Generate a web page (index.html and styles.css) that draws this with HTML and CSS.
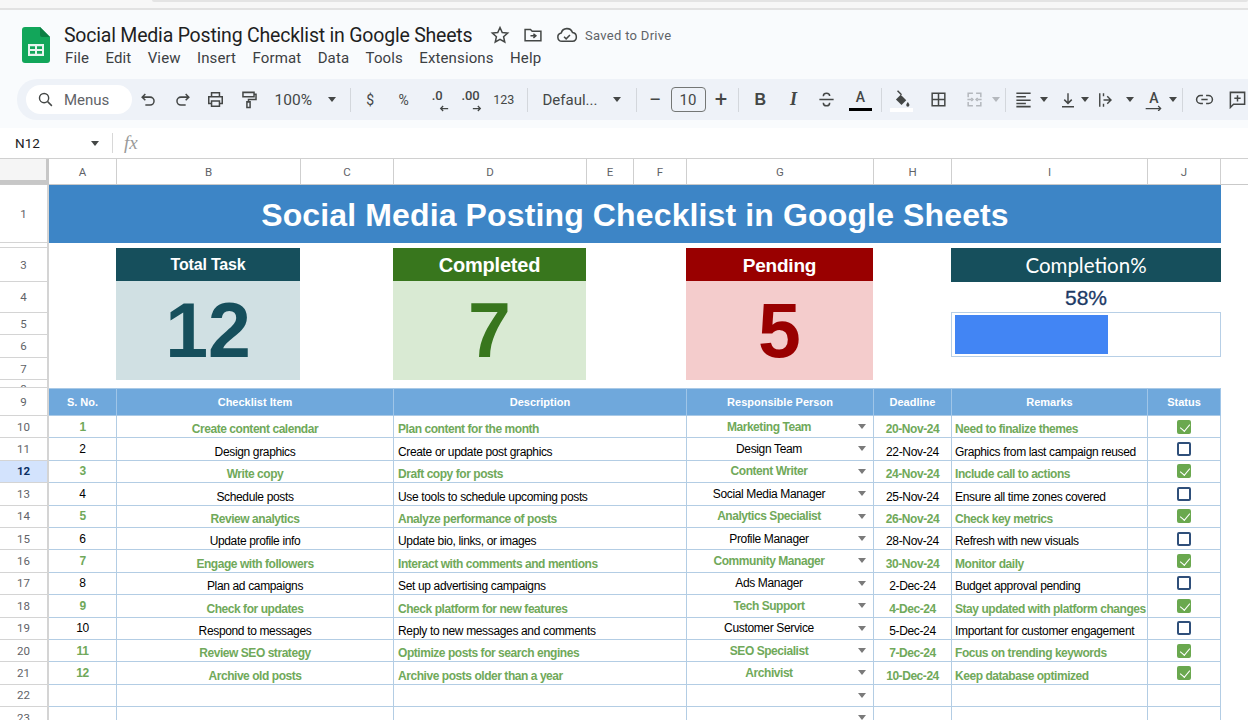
FILE: index.html
```html
<!DOCTYPE html>
<html lang="en">
<head>
<meta charset="utf-8">
<title>Social Media Posting Checklist in Google Sheets</title>
<link rel="stylesheet" href="styles.css">
</head>
<body>
<div class="browser-strip"><div class="browser-pill"></div></div>
<header class="doc-head">
  <svg class="logo" viewBox="0 0 28 36"><path d="M3 0H18L28 10V33a3 3 0 0 1-3 3H3a3 3 0 0 1-3-3V3a3 3 0 0 1 3-3Z" fill="#12a65a"/><path d="M18 0L28 10H20a2 2 0 0 1-2-2Z" fill="#0b7f43"/><path d="M6 17H22V29H6Z M8 19.2V22H13V19.2Z M15 19.2V22H20V19.2Z M8 24V26.8H13V24Z M15 24V26.8H20V24Z" fill="#e8f5ee" fill-rule="evenodd"/></svg>
  <div class="doc-info">
    <div class="doc-title-row">
      <h1 class="doc-title">Social Media Posting Checklist in Google Sheets</h1>
      <svg class="ti star" viewBox="0 0 24 24"><path d="M12 3l2.7 6 6.5.7-4.9 4.3 1.4 6.4L12 17.1l-5.7 3.3 1.4-6.4-4.9-4.3 6.5-.7Z"/></svg>
      <svg class="ti folder" viewBox="0 0 24 24"><path d="M2.5 19V5.5h6.5l2 2h10.500V19Z"/><path d="M9 13h6M12.500 10.500L15.500 13l-3 2.500"/></svg>
      <svg class="ti cloud" viewBox="0 0 26 20"><path d="M7 17.500a5 5 0 0 1-.8-9.900A7 7 0 0 1 19.500 7a5.300 5.300 0 0 1 0 10.500Z"/><path d="M9.500 12l2.500 2.500 4.500-4.500"/></svg>
      <span class="saved">Saved to Drive</span>
    </div>
    <nav class="menu">
      <span>File</span><span>Edit</span><span>View</span><span>Insert</span><span>Format</span><span>Data</span><span>Tools</span><span>Extensions</span><span>Help</span>
    </nav>
  </div>
</header>

<div class="toolbar-wrap">
  <div class="toolbar">
    <div class="search">
      <svg class="sico" viewBox="0 0 24 24"><circle cx="10" cy="10" r="6.500"/><path d="M15 15l6 6"/></svg>
      <span>Menus</span>
    </div>
    <span class="btn"><svg viewBox="0 0 24 24"><path d="M8 5L4 9l4 4M4 9h10a5 5 0 0 1 0 10H8"/></svg></span>
    <span class="btn"><svg viewBox="0 0 24 24"><path d="M16 5l4 4-4 4M20 9H10a5 5 0 0 0 0 10h6"/></svg></span>
    <span class="btn"><svg viewBox="0 0 24 24"><path d="M7 8V3.500h10V8M7 17H3.500V8.500h17V17H17M7 14h10v6.500H7Z"/></svg></span>
    <span class="btn"><svg viewBox="0 0 24 24"><path d="M5 3h14v5.500H5ZM19 5.500h2.500V12H12v3M10 15h4v7h-4Z"/></svg></span>
    <span class="zoom">100%</span><i class="caret zoom-caret"></i>
    <i class="sep sep-a"></i>
    <span class="btn txt">$</span>
    <span class="btn txt">%</span>
    <span class="btn dec dec-l">.0<svg viewBox="0 0 12 8"><path d="M11 4H2M5 1L2 4l3 3"/></svg></span>
    <span class="btn dec dec-r">.00<svg viewBox="0 0 12 8"><path d="M1 4h9M7 1l3 3-3 3"/></svg></span>
    <span class="btn num">123</span>
    <i class="sep sep-b"></i>
    <span class="fontname">Defaul...</span><i class="caret font-caret"></i>
    <i class="sep sep-c"></i>
    <span class="btn sign">&#8722;</span>
    <span class="size">10</span>
    <span class="btn sign plus">+</span>
    <i class="sep sep-d"></i>
    <span class="btn bold">B</span>
    <span class="btn ital">I</span>
    <span class="btn"><svg viewBox="0 0 24 24"><path d="M3 12h18M8 8c0-3 1.500-4 4-4s4 1 4 3.500M8 16c0 3 1.500 4 4 4s4-1 4-4"/></svg></span>
    <span class="btn letter">A<i class="colorbar"></i></span>
    <i class="sep sep-e"></i>
    <span class="btn"><svg viewBox="0 0 24 24"><path class="solid" d="M11 6l7 7-6 6-7-7Z"/><path d="M7 1l5 5"/><path class="solid" d="M20 15c1.500 2 2 3 2 4a2 2 0 0 1-4 0c0-1 .5-2 2-4Z"/></svg><i class="whitebar"></i></span>
    <span class="btn borders"><svg viewBox="0 0 24 24"><path d="M4 4h16v16H4ZM12 4v16M4 12h16"/></svg></span>
    <span class="btn merge"><svg viewBox="0 0 24 24"><path d="M10 4H4v5M4 15v5h6M14 4h6v5M20 15v5h-6M3 12h5M8 10l2 2-2 2M21 12h-5M16 10l-2 2 2 2"/></svg></span><i class="caret light merge-caret"></i>
    <i class="sep sep-f"></i>
    <span class="btn narrow"><svg viewBox="0 0 24 24"><path d="M3 4h18M3 8.500h12M3 13h18M3 17h12M3 21h18"/></svg></span><i class="caret"></i>
    <span class="btn narrow valign"><svg viewBox="0 0 24 24"><path d="M12 3v13M7 11.500l5 5 5-5M4 21h16"/></svg></span><i class="caret"></i>
    <span class="btn narrow wrap"><svg viewBox="0 0 24 24"><path d="M5 3v18M10 12h10M15 7l5 5-5 5M10 3v4M10 17v4"/></svg></span><i class="caret"></i>
    <span class="btn narrow rotate"><b class="ra">A</b><svg viewBox="0 0 24 24"><path d="M2 21h18M17 18l3 3-3 3"/></svg></span><i class="caret"></i>
    <i class="sep sep-g"></i>
    <span class="btn"><svg viewBox="0 0 24 24"><path d="M10 7H7a5 5 0 0 0 0 10h3M14 7h3a5 5 0 0 1 0 10h-3M8 12h8"/></svg></span>
    <span class="btn"><svg viewBox="0 0 24 24"><path d="M3 3h18v15H7l-4 4ZM12 6.500v8M8 10.500h8"/></svg></span>
  </div>
</div>

<div class="formula">
  <span class="namebox">N12</span><i class="caret name-caret"></i>
  <i class="fsep"></i>
  <span class="fx">fx</span>
</div>

<div class="colheads">
  <div class="corner"></div>
  <div>A</div><div>B</div><div>C</div><div>D</div><div>E</div><div>F</div><div>G</div><div>H</div><div>I</div><div>J</div><div class="blank"></div>
</div>

<main class="sheet">
  <div class="rh r1">1</div>
  <div class="banner">Social Media Posting Checklist in Google Sheets</div>
  <div class="rh r2 clip">2</div>
  <div class="rh r3">3</div>
  <div class="rh r4">4</div>
  <div class="rh r5">5</div>
  <div class="rh r6">6</div>
  <div class="rh r7">7</div>
  <div class="rh r8 clip">8</div>

  <div class="kpi kpi-total"><div class="kpi-h">Total Task</div><div class="kpi-v">12</div></div>
  <div class="kpi kpi-done"><div class="kpi-h big">Completed</div><div class="kpi-v">7</div></div>
  <div class="kpi kpi-pend"><div class="kpi-h mid">Pending</div><div class="kpi-v">5</div></div>
  <div class="progress">
    <div class="prog-h">Completion%</div>
    <div class="prog-pct">58%</div>
    <div class="prog-track"><div class="prog-bar" style="width:58.300%"></div></div>
  </div>

  <div class="rh r9">9</div>
  <div class="th a">S. No.</div><div class="th b">Checklist Item</div><div class="th d">Description</div><div class="th g">Responsible Person</div><div class="th h">Deadline</div><div class="th i">Remarks</div><div class="th j">Status</div>

  <div class="rh">10</div><div class="c a done">1</div><div class="c b done">Create content calendar</div><div class="c d done">Plan content for the month</div><div class="c g done">Marketing Team<i class="dd"></i></div><div class="c h done">20-Nov-24</div><div class="c i done">Need to finalize themes</div><div class="c j"><i class="box on"></i></div>
  <div class="rh">11</div><div class="c a">2</div><div class="c b">Design graphics</div><div class="c d">Create or update post graphics</div><div class="c g">Design Team<i class="dd"></i></div><div class="c h">22-Nov-24</div><div class="c i">Graphics from last campaign reused</div><div class="c j"><i class="box"></i></div>
  <div class="rh sel">12</div><div class="c a done">3</div><div class="c b done">Write copy</div><div class="c d done">Draft copy for posts</div><div class="c g done">Content Writer<i class="dd"></i></div><div class="c h done">24-Nov-24</div><div class="c i done">Include call to actions</div><div class="c j"><i class="box on"></i></div>
  <div class="rh">13</div><div class="c a">4</div><div class="c b">Schedule posts</div><div class="c d">Use tools to schedule upcoming posts</div><div class="c g">Social Media Manager<i class="dd"></i></div><div class="c h">25-Nov-24</div><div class="c i">Ensure all time zones covered</div><div class="c j"><i class="box"></i></div>
  <div class="rh">14</div><div class="c a done">5</div><div class="c b done">Review analytics</div><div class="c d done">Analyze performance of posts</div><div class="c g done">Analytics Specialist<i class="dd"></i></div><div class="c h done">26-Nov-24</div><div class="c i done">Check key metrics</div><div class="c j"><i class="box on"></i></div>
  <div class="rh">15</div><div class="c a">6</div><div class="c b">Update profile info</div><div class="c d">Update bio, links, or images</div><div class="c g">Profile Manager<i class="dd"></i></div><div class="c h">28-Nov-24</div><div class="c i">Refresh with new visuals</div><div class="c j"><i class="box"></i></div>
  <div class="rh">16</div><div class="c a done">7</div><div class="c b done">Engage with followers</div><div class="c d done">Interact with comments and mentions</div><div class="c g done">Community Manager<i class="dd"></i></div><div class="c h done">30-Nov-24</div><div class="c i done">Monitor daily</div><div class="c j"><i class="box on"></i></div>
  <div class="rh">17</div><div class="c a">8</div><div class="c b">Plan ad campaigns</div><div class="c d">Set up advertising campaigns</div><div class="c g">Ads Manager<i class="dd"></i></div><div class="c h">2-Dec-24</div><div class="c i">Budget approval pending</div><div class="c j"><i class="box"></i></div>
  <div class="rh">18</div><div class="c a done">9</div><div class="c b done">Check for updates</div><div class="c d done">Check platform for new features</div><div class="c g done">Tech Support<i class="dd"></i></div><div class="c h done">4-Dec-24</div><div class="c i done">Stay updated with platform changes</div><div class="c j"><i class="box on"></i></div>
  <div class="rh">19</div><div class="c a">10</div><div class="c b">Respond to messages</div><div class="c d">Reply to new messages and comments</div><div class="c g">Customer Service<i class="dd"></i></div><div class="c h">5-Dec-24</div><div class="c i">Important for customer engagement</div><div class="c j"><i class="box"></i></div>
  <div class="rh">20</div><div class="c a done">11</div><div class="c b done">Review SEO strategy</div><div class="c d done">Optimize posts for search engines</div><div class="c g done">SEO Specialist<i class="dd"></i></div><div class="c h done">7-Dec-24</div><div class="c i done">Focus on trending keywords</div><div class="c j"><i class="box on"></i></div>
  <div class="rh">21</div><div class="c a done">12</div><div class="c b done">Archive old posts</div><div class="c d done">Archive posts older than a year</div><div class="c g done">Archivist<i class="dd"></i></div><div class="c h done">10-Dec-24</div><div class="c i done">Keep database optimized</div><div class="c j"><i class="box on"></i></div>
  <div class="rh">22</div><div class="c a"></div><div class="c b"></div><div class="c d"></div><div class="c g"><i class="dd"></i></div><div class="c h"></div><div class="c i"></div><div class="c j"></div>
  <div class="rh">23</div><div class="c a"></div><div class="c b"></div><div class="c d"></div><div class="c g"><i class="dd"></i></div><div class="c h"></div><div class="c i"></div><div class="c j"></div>
</main>
</body>
</html>
```

FILE: styles.css
```css
* { box-sizing: border-box; }
html, body { margin: 0; height: 720px; overflow: hidden; }
body { background: #fff; font-family: Roboto, "Liberation Sans", sans-serif; color: #202124; }

.browser-strip { height: 10px; background: #f7f7f7; border-bottom: 2px solid #e2e2e2; padding-left: 152px; }
.browser-pill { height: 2px; background: #e4e4e4; border-radius: 0 0 3px 3px; }

.doc-head { height: 69px; background: #f9fbfd; display: flex; padding: 17px 0 0 22px; }
.logo { width: 28px; height: 36px; flex: none; }
.doc-info { margin-left: 14px; margin-top: -4px; }
.doc-title-row { display: flex; align-items: center; height: 24px; }
.doc-title { margin: 0; font-size: 19.500px; font-weight: 400; color: #1f1f1f; letter-spacing: -0.21px; white-space: nowrap; width: 426px; }
.ti { width: 20px; height: 20px; fill: none; stroke: #444746; stroke-width: 1.800; flex: none; }
.folder { margin-left: 13px; }
.cloud { margin-left: 13px; width: 22px; }
.saved { margin-left: 7px; font-size: 13px; color: #5f6368; letter-spacing: .3px; }
.menu { display: flex; gap: 16.400px; margin-top: 1px; font-size: 15px; letter-spacing: .12px; color: #3c4043; line-height: 20px; padding-left: 1px; }

.toolbar-wrap { height: 49px; background: #f9fbfd; padding-left: 17px; }
.toolbar { height: 41px; background: #eef2f8; border-radius: 20px 0 0 20px; display: flex; align-items: center; padding-left: 9px; width: 1231px; overflow: hidden; color: #444746; }
.search { width: 106px; height: 29px; background: #fff; border-radius: 15px; display: flex; align-items: center; padding-left: 11px; flex: none; font-size: 15px; color: #5f6368; }
.sico { width: 17px; height: 17px; fill: none; stroke: #444746; stroke-width: 2; margin-right: 10px; }
.btn { width: 33.400px; flex: none; height: 24px; display: flex; align-items: center; justify-content: center; position: relative; }
.btn svg { width: 19px; height: 19px; fill: none; stroke: #444746; stroke-width: 1.900; }
.btn svg .solid { fill: #444746; stroke: none; }
.zoom { width: 58px; flex: none; padding-left: 9px; font-size: 15.500px; color: #444746; }
.caret { display: block; width: 0; height: 0; flex: none; border: 4px solid transparent; border-top: 5px solid #444746; border-bottom: 0; }
.caret.light { border-top-color: #b4b8bd; }
.zoom-caret { margin-left: 4px; }
.sep { display: block; flex: none; width: 1px; height: 24px; background: #d3d7dc; }
.sep-a { margin: 0 3px 0 14px; }
.sep-b { margin: 0 15px 0 6px; }
.sep-c { margin: 0 3px 0 15px; }
.sep-d { margin: 0 5px 0 1px; }
.sep-e { margin: 0 3px 0 4px; }
.sep-f { margin: 0 3px 0 5px; }
.sep-g { margin: 0 5px 0 5px; }
.txt { font-size: 14px; color: #444746; }
.dec { font-size: 13px; font-weight: 500; align-items: flex-start; letter-spacing: -.2px; line-height: 16px; }
.dec svg { position: absolute; width: 10px; height: 7px; bottom: 0; stroke-width: 1.500; }
.dec-l svg { left: 19px; }
.dec-r svg { left: 18px; }
.num { font-size: 12.500px; }
.fontname { width: 68px; flex: none; font-size: 15px; color: #444746; }
.font-caret { margin-left: 2px; }
.sign { font-size: 22px; font-weight: 400; width: 31px; }
.size { width: 35px; height: 25px; flex: none; border: 1px solid #747775; border-radius: 4px; display: flex; align-items: center; justify-content: center; font-size: 15px; }
.bold { font-family: "Liberation Sans", sans-serif; font-weight: 700; font-size: 16px; }
.ital { font-family: "Liberation Serif", serif; font-style: italic; font-weight: 700; font-size: 18px; }
.letter { font-size: 14px; font-weight: 500; padding-bottom: 5px; }
.colorbar { position: absolute; left: 5px; right: 5px; top: 20px; height: 3.500px; background: #000; }
.whitebar { position: absolute; left: 5px; right: 5px; top: 20px; height: 4px; background: #fff; }
.borders { margin-left: 3px; }
.merge svg { stroke: #b4b8bd; }
.merge { width: 27px; margin-left: 6px; }
.merge-caret { margin-left: 4px; }
.narrow { width: 30px; }
.narrow + .caret { margin-left: 1px; }
.valign { margin-left: 8px; width: 24px; }
.valign svg, .wrap svg { width: 18px; height: 18px; }
.wrap { margin-left: 0; width: 32px; }
.narrow.wrap + .caret { margin-left: 5px; }
.rotate { margin-left: 6px; width: 28px; }
.rotate svg { position: absolute; left: 3px; top: 3px; width: 22px; height: 20px; stroke-width: 1.500; }
.ra { font-size: 14px; font-weight: 500; margin-top: -4px; }

.formula { height: 31px; background: #fff; display: flex; align-items: center; border-bottom: 1px solid #d0d0d0; padding-left: 15px; }
.namebox { width: 76px; font-size: 13.500px; color: #202124; }
.fsep { display: block; width: 1px; height: 20px; background: #d8d8d8; margin-left: 13px; }
.fx { font-family: "Liberation Serif", serif; font-style: italic; color: #9a9a9a; font-size: 19px; margin-left: 11px; }

.colheads { height: 26px; display: grid; grid-template-columns: 49px 68px 184px 93px 193px 47px 53px 187px 78px 196px 73px 27px; border-bottom: 1px solid #c9c9c9; background: #fff; }
.colheads div { display: flex; align-items: center; justify-content: center; font-size: 11.500px; color: #5f6368; border-right: 1px solid #cfcfcf; }
.colheads .blank { border-right: 0; }
.colheads .corner { background: #f5f5f5; border-right: 3px solid #c7c7c7; box-shadow: inset 0 -4px 0 #c7c7c7; }

.sheet { display: grid; grid-template-columns: 49px 68px 184px 93px 193px 47px 53px 187px 78px 196px 73px 27px; grid-template-rows: 58px 5px 34px 31px 22px 23px 22px 8px 28px repeat(14, 22.400px); font-family: "Liberation Sans", sans-serif; height: 535px; overflow: hidden; }
.rh { grid-column: 1; display: flex; align-items: center; justify-content: center; font-family: Roboto, sans-serif; font-size: 11.500px; color: #5f6368; border-right: 2px solid #d4d4d4; border-bottom: 1px solid #d4d4d4; background: #fff; overflow: hidden; }
.rh.clip { align-items: flex-start; padding-top: 2px; }
.rh.sel { background: #d3e3fd; color: #0b2f63; font-weight: 700; }
.r1 { grid-row: 1; } .r2 { grid-row: 2; } .r3 { grid-row: 3; } .r4 { grid-row: 4; } .r5 { grid-row: 5; } .r6 { grid-row: 6; } .r7 { grid-row: 7; } .r8 { grid-row: 8; } .r9 { grid-row: 9; }

.banner { grid-column: 2 / 12; grid-row: 1; background: #3d85c6; color: #fff; font-weight: 700; font-size: 32px; letter-spacing: .13px; display: flex; align-items: center; justify-content: center; padding-top: 2px; }

.kpi { grid-row: 3 / 8; display: flex; flex-direction: column; text-align: center; margin: 0 1px 0 -1px; }
.kpi-total { grid-column: 3; --dark: #164f5c; --light: #d0e0e3; }
.kpi-done { grid-column: 5; --dark: #38761d; --light: #d9ead3; }
.kpi-pend { grid-column: 8; --dark: #990000; --light: #f4cccc; }
.kpi-h { height: 33px; flex: none; background: var(--dark); color: #fff; font-weight: 700; font-size: 16px; letter-spacing: -.2px; display: flex; align-items: center; justify-content: center; }
.kpi-h.big { font-size: 20px; padding-top: 2px; }
.kpi-h.mid { font-size: 19px; padding-top: 2px; }
.kpi-v { flex: 1; background: var(--light); color: var(--dark); font-weight: 700; font-size: 77px; line-height: 99px; }

.progress { grid-column: 10 / 12; grid-row: 3 / 8; display: flex; flex-direction: column; margin-left: -1px; }
.prog-h { height: 34px; flex: none; background: #164f5c; color: #fff; font-family: Lato, sans-serif; font-size: 20.500px; display: flex; align-items: center; justify-content: center; }
.prog-pct { height: 30px; flex: none; text-align: center; color: #1c3a66; font-size: 21px; line-height: 31px; -webkit-text-stroke: .3px #1c3a66; }
.prog-track { height: 45px; flex: none; border: 1px solid #b7cfe6; padding: 2px 3px; }
.prog-bar { height: 100%; background: #4285f4; }

.th { grid-row: 9; background: #6fa8dc; color: #fff; font-weight: 700; font-size: 11px; display: flex; align-items: center; justify-content: center; border-right: 1px solid #9fc5e8; border-top: 1px solid #a9c9e6; border-bottom: 1px solid #a9c9e6; }
.a { grid-column: 2; }
.b { grid-column: 3 / 5; }
.d { grid-column: 5 / 8; }
.g { grid-column: 8; }
.h { grid-column: 9; }
.i { grid-column: 10; }
.j { grid-column: 11; }

.c { position: relative; font-size: 12px; letter-spacing: -.35px; color: #000; white-space: nowrap; display: flex; align-items: flex-end; justify-content: center; padding-bottom: 1px; border-right: 1px solid #b3cde4; border-bottom: 1px solid #b3cde4; }
.c.done { color: #70a95a; font-weight: 700; letter-spacing: -.45px; }
.c.a { align-items: center; padding-bottom: 0; }
.c.d { justify-content: flex-start; padding-left: 4px; }
.c.i { justify-content: flex-start; padding-left: 3px; }
.c.g { align-items: center; padding: 0 22px 0 0; }
.c.j { align-items: center; padding-bottom: 0; }
.dd { position: absolute; right: 7px; top: 8px; width: 0; height: 0; border: 4px solid transparent; border-top: 5px solid #7a7a7a; border-bottom: 0; }
.box { display: block; width: 14px; height: 14px; border: 2px solid #2f4f7a; border-radius: 2px; position: relative; }
.box.on { background: #6aa84f; border-color: #6aa84f; }
.box.on::after { content: ""; position: absolute; left: 3px; top: 0; width: 5px; height: 8px; border: solid #fff; border-width: 0 1.500px 1.500px 0; transform: rotate(40deg); }
```
